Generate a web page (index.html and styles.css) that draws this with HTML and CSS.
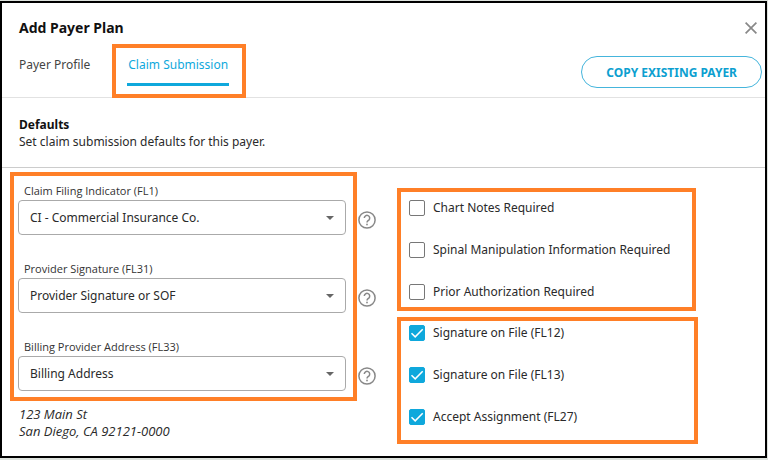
FILE: index.html
```html
<!DOCTYPE html>
<html lang="en">
<head>
<meta charset="utf-8">
<meta name="viewport" content="width=device-width, initial-scale=1">
<title>Add Payer Plan</title>
<link rel="stylesheet" href="styles.css">
</head>
<body>
<svg class="sprite" aria-hidden="true">
  <symbol id="help" viewBox="0 0 18 18">
    <circle cx="9" cy="9" r="8.1" fill="none" stroke="currentColor" stroke-width="1.5"/>
    <path d="M6.3 7.1a2.7 2.7 0 1 1 4.5 2C9.8 9.900 9 10.300 9 11.600" fill="none" stroke="currentColor" stroke-width="1.5"/>
    <rect x="8.200" y="12.700" width="1.600" height="1.600" fill="currentColor"/>
  </symbol>
  <symbol id="caret" viewBox="0 0 8 4">
    <path d="M0 0h8L4 4z" fill="currentColor"/>
  </symbol>
</svg>
<main class="dialog">
  <header class="dialog-header">
    <div class="title-row">
      <h1 class="title">Add Payer Plan</h1>
      <button class="close" type="button" aria-label="Close">
        <svg viewBox="0 0 12 12"><path d="M.6.6l10.800 10.800M11.400.6L.6 11.400" fill="none" stroke="currentColor" stroke-width="1.700"/></svg>
      </button>
    </div>
    <div class="toolbar">
      <nav class="tabs">
        <a class="tab" href="#profile">Payer Profile</a>
        <a class="tab tab-active framed" href="#claim">Claim Submission</a>
      </nav>
      <button class="copy" type="button">COPY EXISTING PAYER</button>
    </div>
  </header>
  <section class="intro">
    <h2 class="intro-title">Defaults</h2>
    <p class="intro-text">Set claim submission defaults for this payer.</p>
  </section>
  <form class="form">
    <div class="left">
      <div class="fields framed">
        <div class="field">
          <label class="label" for="filing">Claim Filing Indicator (FL1)</label>
          <div class="select-wrap">
            <select class="select" id="filing"><option>CI - Commercial Insurance Co.</option></select>
            <svg class="caret"><use href="#caret"/></svg>
          </div>
          <button class="help" type="button" aria-label="Help"><svg><use href="#help"/></svg></button>
        </div>
        <div class="field">
          <label class="label" for="signature">Provider Signature (FL31)</label>
          <div class="select-wrap">
            <select class="select" id="signature"><option>Provider Signature or SOF</option></select>
            <svg class="caret"><use href="#caret"/></svg>
          </div>
          <button class="help" type="button" aria-label="Help"><svg><use href="#help"/></svg></button>
        </div>
        <div class="field">
          <label class="label" for="address">Billing Provider Address (FL33)</label>
          <div class="select-wrap">
            <select class="select" id="address"><option>Billing Address</option></select>
            <svg class="caret"><use href="#caret"/></svg>
          </div>
          <button class="help" type="button" aria-label="Help"><svg><use href="#help"/></svg></button>
        </div>
      </div>
      <address class="address">123 Main St<br>San Diego, CA 92121-0000</address>
    </div>
    <div class="right">
      <div class="checks checks-required framed">
        <label class="check"><input class="box" type="checkbox">Chart Notes Required</label>
        <label class="check"><input class="box" type="checkbox">Spinal Manipulation Information Required</label>
        <label class="check"><input class="box" type="checkbox">Prior Authorization Required</label>
      </div>
      <div class="checks checks-defaults framed">
        <label class="check"><span class="box-wrap"><input class="box" type="checkbox" checked><svg class="tick" viewBox="0 0 16 16"><path d="M2.500 8.200l3.700 3.700 7.500-7.600"/></svg></span>Signature on File (FL12)</label>
        <label class="check"><span class="box-wrap"><input class="box" type="checkbox" checked><svg class="tick" viewBox="0 0 16 16"><path d="M2.500 8.200l3.700 3.700 7.500-7.600"/></svg></span>Signature on File (FL13)</label>
        <label class="check"><span class="box-wrap"><input class="box" type="checkbox" checked><svg class="tick" viewBox="0 0 16 16"><path d="M2.500 8.200l3.700 3.700 7.500-7.600"/></svg></span>Accept Assignment (FL27)</label>
      </div>
    </div>
  </form>
</main>
</body>
</html>
```
FILE: styles.css
```css
:root {
  --blue: #0fa8dc;
  --orange: #ff7f27;
}

* {
  box-sizing: border-box;
}

body {
  margin: 0;
  padding: 1px 1px 2px 0;
  background: #dde2dd;
  color: #2a2a2a;
  font: 12px/17px "Noto Sans", "Open Sans", sans-serif;
}

button,
select {
  font: inherit;
}

.sprite {
  position: absolute;
  width: 0;
  height: 0;
}

.dialog {
  min-height: calc(100vh - 3px);
  border: 2px solid #000;
  background: #fff;
}

/* Callout frame drawn over a highlighted group */
.framed {
  position: relative;
}

.framed::after {
  content: "";
  position: absolute;
  border: 4px solid var(--orange);
  pointer-events: none;
}

.dialog-header {
  padding: 15px 3px 9px 17px;
  border-bottom: 1px solid #e2e2e2;
}

.title-row {
  display: flex;
  align-items: center;
  justify-content: space-between;
  padding-right: 5px;
}

.title {
  margin: 0;
  color: #111;
  font-size: 14px;
  line-height: 20px;
}

.close {
  display: flex;
  padding: 0;
  border: 0;
  background: none;
  color: #888;
}

.close svg {
  width: 12px;
  height: 12px;
}

.toolbar {
  display: flex;
  align-items: flex-start;
  justify-content: space-between;
  margin-top: 18px;
}

.tabs {
  display: flex;
  gap: 37px;
}

.tab {
  padding-bottom: 9px;
  border-bottom: 3px solid transparent;
  color: #444;
  line-height: 18px;
  text-decoration: none;
}

.tab-active {
  padding-inline: 1px;
  border-color: var(--blue);
  color: var(--blue);
}

.tab-active::after {
  inset: -12px -17px -15px -15px;
}

.copy {
  height: 32px;
  padding: 0 24px;
  border: 1px solid #45b5dc;
  border-radius: 16px;
  background: #fff;
  color: #0d9fd0;
  font-weight: 700;
}

.intro {
  padding: 18px 17px 17px;
  border-bottom: 1px solid #ccc;
}

.intro-title {
  margin: 0;
  color: #111;
  font-size: 12px;
  line-height: 17px;
}

.intro-text {
  margin: 0;
}

.form {
  display: grid;
  grid-template-columns: 358fr 340fr;
  gap: 33px;
  padding: 0 16px;
}

.left {
  padding-top: 15px;
}

.fields {
  display: grid;
  gap: 26px;
}

.fields::after {
  inset: -11px 19px -10px -8px;
}

.field {
  display: grid;
  grid-template-columns: 1fr 18px;
  gap: 1px 12px;
}

.label {
  grid-column: 1 / -1;
  padding-left: 6px;
  color: #333;
  font: 11px/16px "Open Sans", sans-serif;
}

.select-wrap {
  position: relative;
}

.select {
  display: block;
  width: 100%;
  height: 35px;
  padding: 0 28px 0 11px;
  border: 1px solid #aaa;
  border-radius: 4px;
  appearance: none;
  background: #fff;
  color: #2a2a2a;
}

.caret {
  position: absolute;
  top: 16px;
  right: 12px;
  width: 8px;
  height: 4px;
  color: #666;
  pointer-events: none;
}

.help {
  align-self: end;
  margin-bottom: 6px;
  padding: 0;
  border: 0;
  background: none;
  color: #888;
}

.help svg {
  display: block;
  width: 18px;
  height: 18px;
}

.address {
  margin-top: 15px;
  padding-left: 1px;
  font: italic 13px/17px "Open Sans", sans-serif;
}

.right {
  display: grid;
  gap: 23px;
  align-content: start;
  justify-self: start;
  padding-top: 31px;
}

.checks {
  display: grid;
  gap: 24px;
}

.checks-required::after {
  inset: -11px -26px -10px -12px;
}

.checks-defaults::after {
  inset: -7px -28px -18px -12px;
}

.check {
  display: flex;
  align-items: center;
  gap: 8px;
  line-height: 18px;
}

.box-wrap {
  display: flex;
  position: relative;
}

.box {
  width: 16px;
  height: 16px;
  margin: 0;
  border: 1px solid #777;
  border-radius: 2px;
  appearance: none;
  background: #fff;
}

.box:checked {
  border-color: var(--blue);
  background: var(--blue);
}

.tick {
  position: absolute;
  inset: 0;
  width: 16px;
  height: 16px;
  fill: none;
  stroke: #fff;
  stroke-width: 1.5;
  pointer-events: none;
}
```
